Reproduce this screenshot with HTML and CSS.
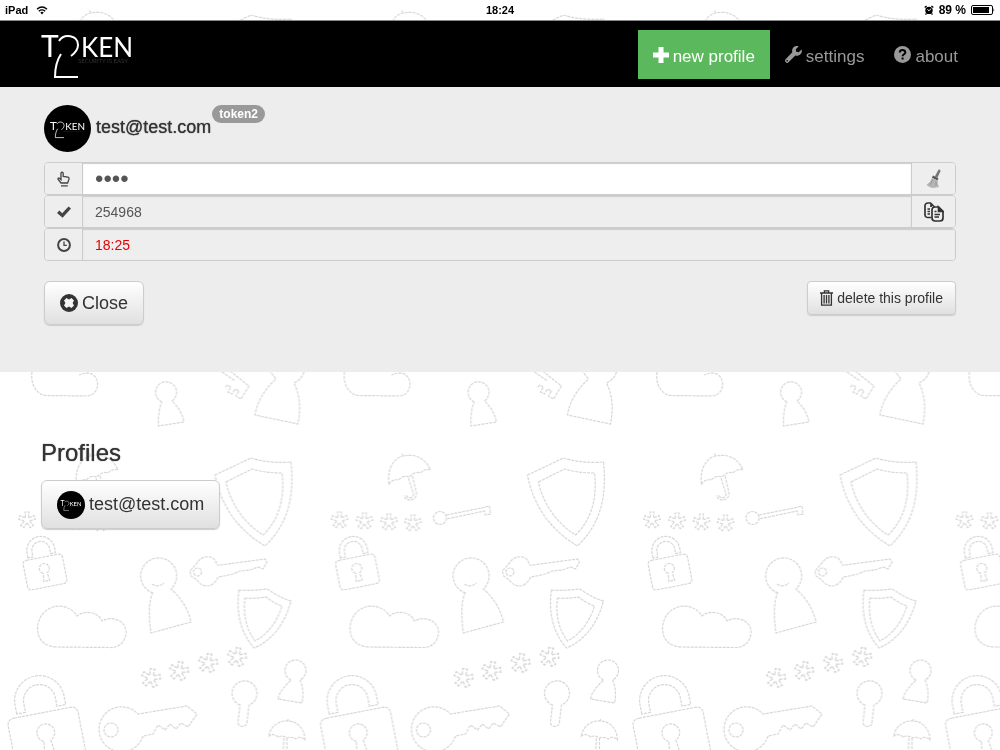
FILE: index.html
```
<!DOCTYPE html>
<html lang="en">
<head>
    <meta charset="UTF-8">
    <meta name="viewport" content="width=device-width, initial-scale=1.0">
    <title>Token2</title>
    <link rel="stylesheet" href="styles.css">
</head>
<body>
    <!-- shared shapes -->
    <svg class="defs" width="0" height="0" aria-hidden="true">
        <symbol id="logo" viewBox="0 0 92 46" overflow="visible">
            <g fill="#fff" font-family="Lato, sans-serif">
                <text x="0" y="23" font-size="30">T</text>
                <text x="40" y="23" font-size="26">KEN</text>
            </g>
            <path d="M18 7C23-1 37 1 37 11C37 16 34 19 30 22M20 20C16 26 14 34 14 43H37" fill="none" stroke="#fff" stroke-width="2"/>
            <text x="37" y="29" fill="#333" font-family="Lato, sans-serif" font-size="6">SECURITY IS EASY</text>
        </symbol>
        <symbol id="avatar" viewBox="0 0 47 47">
            <circle cx="23.5" cy="23.5" r="23.5" fill="#000"/>
            <use href="#logo" x="6" y="16" width="35" height="18"/>
        </symbol>
    </svg>

    <svg class="wallpaper" width="100%" height="100%" aria-hidden="true">
        <defs>
            <path id="arm" d="M-1.5-2.5L-2-8H2L1.5-2.5"/>
            <g id="star">
                <use href="#arm"/>
                <use href="#arm" transform="rotate(72)"/>
                <use href="#arm" transform="rotate(144)"/>
                <use href="#arm" transform="rotate(216)"/>
                <use href="#arm" transform="rotate(288)"/>
            </g>
            <g id="lock">
                <path vector-effect="non-scaling-stroke" d="M-16-15H16Q20-15 20-11V11Q20 15 16 15H-16Q-20 15-20 11V-11Q-20-15-16-15Z"/>
                <path vector-effect="non-scaling-stroke" d="M-14-17V-22A14 14 0 0 1 14-22V-17H9V-22A9 9 0 0 0-9-22V-17Z"/>
                <path vector-effect="non-scaling-stroke" d="M-2 1A5 5 0 1 1 2 1L3 9H-3Z"/>
            </g>
            <pattern id="doodles" patternUnits="userSpaceOnUse" x="0" y="360" width="312.5" height="443">
                <g class="doodle" transform="translate(0 -360)">
                    <path d="M32 372C30 386 38 395 46 395.5L86 396C101 396 101 374 88 373C84 373 82 374 79 375"/>
                    <path d="M162 402A10.5 10.5 0 1 1 172 401C177 406 182 412 184 422L158.5 426C158 418 159 407 162 402"/>
                    <path d="M222 372L235 381M230 371L249 386L241 399L236 396L239 391L235 389L232 394L228 392L231 387L227 385L225 388"/>
                    <path d="M269 370L276 379C264 390 257 402 255 415L298 424C301 408 300 395 294 383Q302 379 304 372"/>
                    <path d="M76.5 484C74 464 86 456 91 456C104 453 114 460 118 470C113 468 109 472 108 473C103 471 99 475 97 477C92 475 88 478 86 480C82 479 79 481 76.5 484ZM91 456L89 453M96 478L101 494C101 499 94 499 94 495M100 476L104 493C104 503 91 501 92 495"/>
                    <use href="#star" x="27" y="520"/>
                    <use href="#star" x="52" y="521"/>
                    <use href="#star" x="76.5" y="522"/>
                    <use href="#star" x="100.5" y="523"/>
                    <circle cx="127.5" cy="518" r="6.5"/>
                    <path d="M134 515L169 508L177 506L178 514L173 515L172 511L134 519"/>
                    <path d="M215 475L251 458C262 462 280 463 291 462C295 500 286 526 265 546C238 530 221 506 215 475Z"/>
                    <path d="M226 482L252 469C262 472 272 473 282 473C285 498 279 520 263 535C243 522 231 504 226 482Z"/>
                    <use href="#lock" transform="translate(45 572) rotate(-11)"/>
                    <path d="M153 593A18 18 0 1 1 171 589C180 597 188 608 191 622L151 633C149 620 148 602 153 592M152 584Q158 588 164 583"/>
                    <path d="M220 565L265 559L267 562L263 569L258 567L250 570L240 571L233 574L224 576L218 577C216 582 213 585 208 586C202 586 199 583 197 580L191 576L190 571L197 563C200 558 205 556 210 557C214 558 216 561 217 565Z"/>
                    <circle cx="197.5" cy="572" r="4"/>
                    <path d="M239 590C249 591 258 590 267 589C275 594 283 599 291 601C285 623 273 640 254 648C240 632 236 612 239 590Z"/>
                    <path d="M245 598C252 599 259 598 266 597C271 601 276 604 282 606C277 622 268 634 255 641C246 629 243 614 245 598Z"/>
                    <path d="M56 647C40 646 36 634 38 624C42 604 67 600 77 616C86 609 99 613 102 621C112 615 127 621 126 633C125 643 118 648 110 647.5Z"/>
                    <use href="#star" transform="translate(151 678) rotate(10) scale(1.15)"/>
                    <use href="#star" transform="translate(179 671) rotate(10) scale(1.15)"/>
                    <use href="#star" transform="translate(208 663) rotate(10) scale(1.15)"/>
                    <use href="#star" transform="translate(237 657) rotate(10) scale(1.15)"/>
                    <use href="#lock" transform="translate(47 739) rotate(-11) scale(1.78)"/>
                    <path d="M143 736A22.5 22.5 0 1 1 138 714L187 706L197 714L188 727L181 723L176 729L170 724L165 730L158 725L153 734Z"/>
                    <circle cx="111" cy="730" r="7"/>
                    <path d="M240 705A12.5 12.5 0 1 1 249 705L247 722C247 728 238 728 238 722Z"/>
                    <path d="M291 680A10.5 10.5 0 1 1 300 680C303 687 304 694 302 703L278 699C279 693 283 688 291 680"/>
                    <path d="M269 736C270 726 280 720 288 721C298 721 305 730 305 740C301 736 297 737 296 739C293 737 289 737 287 738C283 735 280 736 278 737C275 734 272 734 269 736ZM288 721V719M284 738L283 755M287 738V755"/>
                </g>
            </pattern>
        </defs>
        <rect width="100%" height="100%" fill="url(#doodles)"/>
    </svg>

    <div class="status">
        <div class="status-left">
            iPad
            <svg width="12" height="9" viewBox="0 0 12 9" fill="none" stroke="#000" stroke-width="1.4">
                <path d="M1 3.2Q6-1 11 3.2M2.8 5.2Q6 2.6 9.2 5.2"/>
                <path d="M4.3 6.4Q6 5 7.7 6.4L6 8.6Z" fill="#000" stroke="none"/>
            </svg>
        </div>
        <div>18:24</div>
        <div class="status-right">
            <svg width="10" height="10" viewBox="0 0 10 10">
                <circle cx="5" cy="5.4" r="3.7"/>
                <path d="M.7 2.6L2.6.9M7.4.9L9.3 2.6M2.4 8.4L1.6 9.6M7.6 8.4L8.4 9.6" stroke="#000" stroke-width="1.3"/>
                <path d="M3.4 4.4L5 5.8L7 3.6" fill="none" stroke="#fff"/>
            </svg>
            89 %
            <svg width="24" height="10" viewBox="0 0 24 10">
                <rect x=".5" y=".5" width="21" height="9" rx="1.5" fill="none" stroke="#000"/>
                <rect x="2" y="2" width="16" height="6"/>
                <path d="M22.5 3Q24 5 22.5 7Z"/>
            </svg>
        </div>
    </div>

    <header>
        <a class="brand" href="#" aria-label="Token2"><svg width="92" height="46"><use href="#logo"/></svg></a>
        <nav>
            <a class="new" href="#">
                <svg width="16" height="16" viewBox="0 0 16 16"><path d="M5.5 0h5v5.5H16v5h-5.5V16h-5v-5.5H0v-5h5.5z"/></svg>
                new profile
            </a>
            <a href="#">
                <svg width="17" height="17" viewBox="0 0 17 17"><path d="M16.6 3.6L13.7 6.2L11.2 5.7L10.8 3.2L13.6.4C11.6-.4 9.4.1 8.1 1.7C7 3.1 6.9 4.8 7.3 6.2L.6 13.3C-.2 14.2-.1 15.5.7 16.3C1.5 17.1 2.8 17.1 3.6 16.2L10.3 9.4C12 10 14 9.6 15.4 8.2C16.8 6.9 17.2 5.1 16.6 3.6ZM2.1 15.5A.8.8 0 1 1 2.2 13.9A.8.8 0 0 1 2.1 15.5Z"/></svg>
                settings
            </a>
            <a href="#">
                <svg width="17" height="17" viewBox="0 0 17 17"><circle cx="8.5" cy="8.5" r="8.5"/><path d="M5.8 6.5C5.9 3.3 11.3 3.3 11.3 6.4C11.3 8.4 8.6 8.2 8.6 10.3M8.6 11.4V13.6" fill="none" stroke="#000" stroke-width="2"/></svg>
                about
            </a>
        </nav>
    </header>

    <main>
        <form class="panel">
            <div class="who">
                <svg width="47" height="47"><use href="#avatar"/></svg>
                <h4>test@test.com</h4>
                <span class="badge">token2</span>
            </div>

            <div class="group">
                <label class="addon" for="pin" aria-label="PIN">
                    <svg width="13" height="16" viewBox="0 0 13 16" fill="none" stroke="#444" stroke-width="1.3"><path d="M4 12L1 8.2Q.8 6.6 2.6 7.2L4 8.6V2Q5 .2 6.2 2V5.4L11 6.2Q12.3 6.6 12 8.2L10.6 12ZM4 14.8H10.8"/></svg>
                </label>
                <input class="pin" id="pin" type="password" value="1234">
                <button class="addon tool" type="button" aria-label="Clear">
                    <svg width="16" height="20" viewBox="0 0 16 20"><path d="M12.6.5Q14.8.2 14.4 2.2L11.6 8.6L8.8 7.4Z" fill="#777"/><path d="M7 6.6L12.4 9.2L11.6 11.4L6 8.7Z" fill="#555"/><path d="M6 9L11.6 11.4Q11.4 15 13 18L7 19Q2.4 18.4.6 15.8Q4.8 13 6 9Z" fill="#b5b5b5"/><path d="M6.8 10.4L4 16M10 12.4V17" stroke="#999"/></svg>
                </button>
            </div>
            <div class="group">
                <label class="addon" for="otp" aria-label="Code">
                    <svg width="14" height="12" viewBox="0 0 14 12" fill="#444"><path d="M0 7L2.4 4.6L5.2 7.2L11.6.4L14 2.4L5.6 11.8Z"/></svg>
                </label>
                <input id="otp" type="text" value="254968" readonly>
                <button class="addon tool" type="button" aria-label="Copy">
                    <svg width="20" height="20" viewBox="0 0 20 20" fill="none" stroke="#333" stroke-width="1.7"><path d="M7 15.5H4Q1 15.5 1 12.5V4Q1 1 4 1H6.5L10.5 5M7 1V5M3.5 7H6M3.5 9.5H6M3.5 12H6"/><path d="M11 5H14.5L19 9.5V16Q19 19 16 19H11Q8 19 8 16V8Q8 5 11 5Z"/><path d="M14.5 5V9.5H19Z" fill="#333"/><path d="M10.5 9.5H12.5M10.5 12.5H16M10.5 15H15"/></svg>
                </button>
            </div>
            <div class="group">
                <label class="addon" for="until" aria-label="Valid until">
                    <svg width="14" height="14" viewBox="0 0 14 14" fill="none" stroke="#444"><circle cx="7" cy="7" r="5.9" stroke-width="2"/><path d="M7 3.4V7.3H9.8" stroke-width="1.3"/></svg>
                </label>
                <input class="expires" id="until" type="text" value="18:25" readonly>
            </div>

            <div class="actions">
                <button class="btn large" type="button">
                    <svg width="18" height="18" viewBox="0 0 18 18"><circle cx="9" cy="9" r="9" fill="#333"/><path d="M4 6.5L6.5 4L9 5.4L11.5 4L14 6.5L12.6 9L14 11.5L11.5 14L9 12.6L6.5 14L4 11.5L5.4 9Z" fill="#f5f5f5"/></svg>
                    Close
                </button>
                <button class="btn" type="button">
                    <svg width="13" height="16" viewBox="0 0 13 16" fill="none" stroke="#333" stroke-width="1.3"><path d="M0 3H13M4.4 3V.8H8.6V3M1.6 3V15.2H11.4V3M4.1 5V13.4M6.5 5V13.4M8.9 5V13.4"/></svg>
                    delete this profile
                </button>
            </div>
        </form>

        <section class="profiles">
            <h3>Profiles</h3>
            <button class="btn profile" type="button">
                <svg width="28" height="28"><use href="#avatar"/></svg>
                test@test.com
            </button>
        </section>
    </main>
</body>
</html>
```

FILE: styles.css
```
* {
    box-sizing: border-box;
}

body {
    margin: 0;
    font-family: "Liberation Sans", Arial, sans-serif;
    font-size: 14px;
    color: #333;
    background: #fff;
}

svg {
    flex: none;
    display: block;
}

h3, h4 {
    margin: 0;
    font-weight: normal;
    text-shadow: 0 0 1px #333;
}

.defs {
    position: absolute;
}

.wallpaper {
    position: fixed;
    top: 0;
    left: 0;
    z-index: -1;
}

.doodle {
    fill: none;
    stroke: #d6d6d6;
    stroke-width: 1.2;
    stroke-dasharray: 3 1;
}

/* status bar */
.status {
    display: grid;
    grid-template-columns: 1fr auto 1fr;
    align-items: center;
    height: 21px;
    padding: 0 5px;
    border-bottom: 1px solid #888;
    font-size: 11px;
    font-weight: bold;
    color: #000;
}

.status-left,
.status-right {
    display: flex;
    align-items: center;
    gap: 8px;
}

.status-right {
    justify-content: flex-end;
    gap: 5px;
    font-size: 12px;
}

/* header */
header {
    display: flex;
    justify-content: space-between;
    align-items: center;
    height: 66px;
    padding: 0 27px 0 41px;
    background: #000;
}

.brand {
    padding-top: 6px;
}

nav {
    display: flex;
}

nav a {
    display: flex;
    align-items: center;
    gap: 4px;
    height: 49px;
    padding: 5px 15px 0;
    font-size: 17px;
    color: #999;
    fill: #999;
    text-decoration: none;
}

nav svg {
    margin-bottom: 4px;
}

nav .new {
    background: #5cb85c;
    color: #fff;
    fill: #fff;
}

/* open profile */
.panel {
    padding: 18px 44px 47px;
    background: #ededed;
}

.who {
    display: flex;
    align-items: center;
    gap: 5px;
    margin-bottom: 10px;
}

.who h4 {
    font-size: 18px;
    line-height: 20px;
    padding-bottom: 4px;
}

.badge {
    align-self: flex-start;
    margin-left: -4px;
    padding: 0 7px;
    border-radius: 10px;
    background: #999;
    color: #fff;
    font-size: 12px;
    font-weight: bold;
    line-height: 18px;
}

.group {
    display: flex;
    height: 33px;
    border: 1px solid #ccc;
    border-radius: 4px;
    overflow: hidden;
}

.addon {
    display: flex;
    align-items: center;
    justify-content: center;
    width: 38px;
    flex: none;
    background: #eee;
    border: 0;
    border-right: 1px solid #ccc;
}

.tool {
    width: 44px;
    padding: 0;
    border-right: 0;
    border-left: 1px solid #ccc;
}

.group input {
    flex: 1;
    min-width: 0;
    padding: 0 12px;
    border: 0;
    background: #eee;
    box-shadow: inset 0 1px 1px #ccc;
    font-family: inherit;
    font-size: 14px;
    color: #555;
}

.group .pin {
    background: #fff;
    font-size: 24px;
}

.group .expires {
    color: #e60000;
}

.actions {
    display: flex;
    justify-content: space-between;
    align-items: flex-start;
    margin-top: 20px;
}

.btn {
    display: flex;
    align-items: center;
    gap: 4px;
    height: 34px;
    padding: 0 12px;
    border: 1px solid #ccc;
    border-radius: 4px;
    background: linear-gradient(#fff, #e0e0e0);
    box-shadow: 0 1px 1px #ccc;
    font-family: inherit;
    font-size: 14px;
    color: #333;
    cursor: pointer;
}

.btn:hover {
    background: #e0e0e0;
}

.large {
    height: 44px;
    padding: 0 15px;
    border-radius: 6px;
    font-size: 18px;
}

.profiles {
    padding: 68px 41px 40px;
}

.profiles h3 {
    margin-bottom: 14px;
    font-size: 24px;
    line-height: 26px;
}

.profile {
    height: 49px;
    padding: 0 15px;
    border-radius: 6px;
    font-size: 18px;
}
```
